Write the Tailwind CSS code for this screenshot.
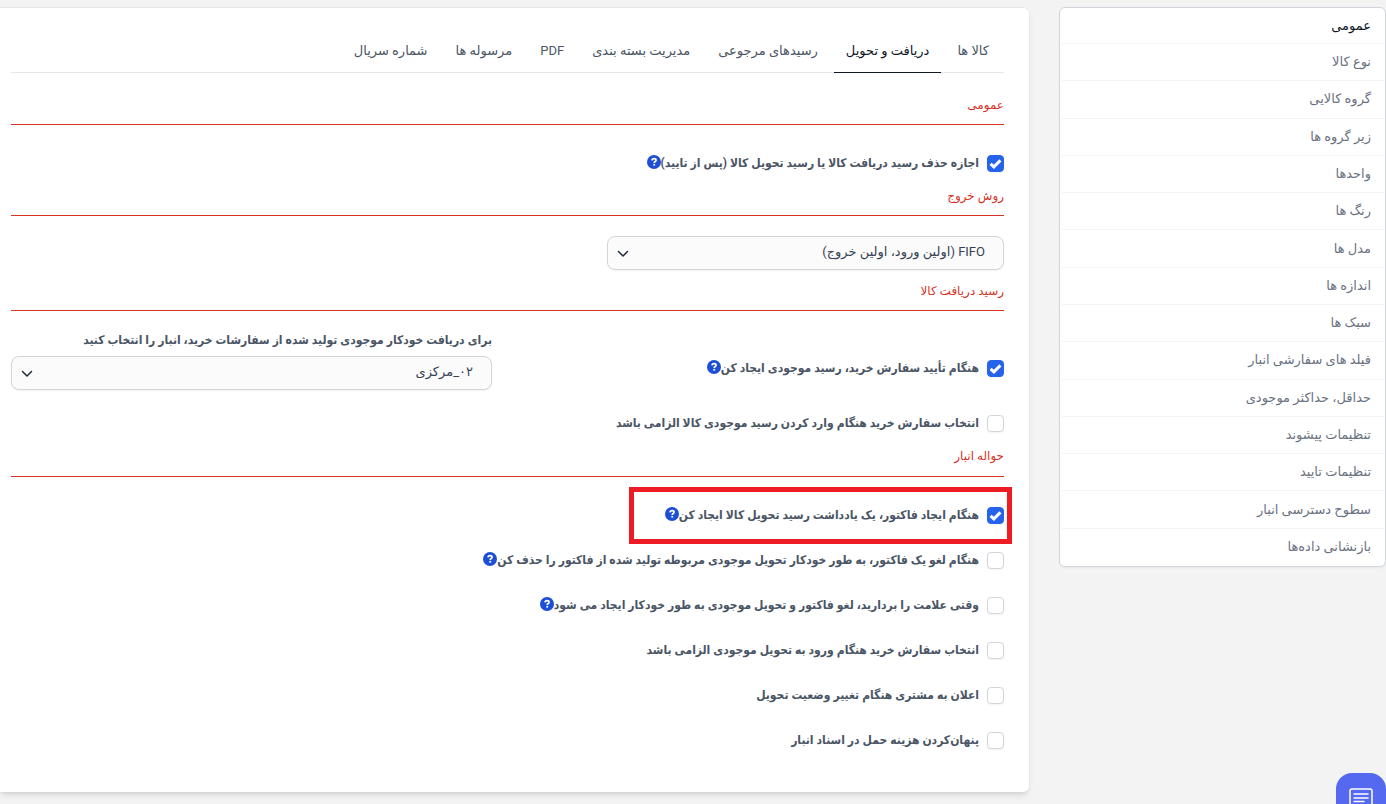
<!DOCTYPE html>
<html lang="fa" dir="rtl">
<head>
<meta charset="utf-8">
<meta name="viewport" content="width=device-width, initial-scale=1">
<title>تنظیمات انبار</title>
<script src="https://cdn.jsdelivr.net/npm/@tailwindcss/browser@4"></script>
</head>
<body class="min-h-screen overflow-x-hidden bg-[#f3f3f3] font-['Roboto','DejaVu_Sans',sans-serif] text-[13px] leading-5 text-gray-600">
<svg class="hidden" aria-hidden="true">
  <symbol id="help" viewBox="0 0 14 14">
    <circle cx="7" cy="7" r="7" fill="#1d4ed8"/>
    <path d="M5 5.400C5.100 4.100 6 3.600 7.100 3.600c1.200 0 2 .7 2 1.600 0 1.300-1.900 1.400-1.900 2.700" fill="none" stroke="#fff" stroke-width="1.700"/>
    <rect x="6.300" y="8.900" width="1.800" height="1.700" fill="#fff"/>
  </symbol>
  <symbol id="chevron" viewBox="0 0 12 8">
    <path d="M1.500 1.500 6 6l4.500-4.500" fill="none" stroke="#1f2937" stroke-width="1.500" stroke-linecap="round" stroke-linejoin="round"/>
  </symbol>
  <symbol id="tick" viewBox="0 0 17 17">
    <path d="M3.600 8.800 6.900 11.900l6.500-6.500" fill="none" stroke="#fff" stroke-width="3"/>
  </symbol>
</svg>
<div class="flex items-start gap-[30px] pt-[7px]">
  <nav aria-label="تنظیمات" class="w-[327px] shrink-0 rounded-md border border-gray-300 bg-white shadow-xs">
    <ul class="grid min-h-[558px] grid-rows-[36px] auto-rows-fr divide-y divide-gray-100 text-[13px] text-gray-500 *:me-[2px] *:flex *:items-center *:ps-[14px]">
      <li><a href="#" aria-current="page" class="text-gray-900">عمومی</a></li>
      <li><a href="#">نوع کالا</a></li>
      <li><a href="#">گروه کالایی</a></li>
      <li><a href="#">زیر گروه ها</a></li>
      <li><a href="#">واحدها</a></li>
      <li><a href="#">رنگ ها</a></li>
      <li><a href="#">مدل ها</a></li>
      <li><a href="#">اندازه ها</a></li>
      <li><a href="#">سبک ها</a></li>
      <li><a href="#">فیلد های سفارشی انبار</a></li>
      <li><a href="#">حداقل، حداکثر موجودی</a></li>
      <li><a href="#">تنظیمات پیشوند</a></li>
      <li><a href="#">تنظیمات تایید</a></li>
      <li><a href="#">سطوح دسترسی انبار</a></li>
      <li><a href="#">بازنشانی داده‌ها</a></li>
    </ul>
  </nav>

  <main class="min-w-0 flex-1 rounded-r-md border-t border-gray-200 bg-white ps-[25px] pe-[11px] pt-5 pb-[42px] shadow-md">
    <nav aria-label="بخش‌ها" class="flex gap-1 border-b border-gray-200 ps-[3px] text-[13px]">
      <a href="#" class="px-3 pt-[13px] pb-[11px]">کالا ها</a>
      <a href="#" aria-current="page" class="-mb-px border-b border-gray-900 px-3 pt-[13px] pb-[11px] text-gray-900">دریافت و تحویل</a>
      <a href="#" class="px-3 pt-[13px] pb-[11px]">رسیدهای مرجوعی</a>
      <a href="#" class="px-3 pt-[13px] pb-[11px]">مدیریت بسته بندی</a>
      <a href="#" class="px-3 pt-[13px] pb-[11px]">PDF</a>
      <a href="#" class="px-3 pt-[13px] pb-[11px]">مرسوله ها</a>
      <a href="#" class="px-3 pt-[13px] pb-[11px]">شماره سریال</a>
    </nav>

    <form class="[&_label]:font-['Roboto','DejaVu_Sans_Condensed','DejaVu_Sans',sans-serif]">
      <h2 class="mt-[22px] border-b border-[#d6321f] pb-[9px] text-[12px] leading-5 text-[#d6321f]">عمومی</h2>
      <div class="mt-7 flex items-center">
        <label class="flex items-center gap-2 text-[12px] font-bold"><span class="relative flex size-[17px]"><input type="checkbox" checked class="peer size-[17px] appearance-none rounded-sm border border-gray-300 bg-white shadow-xs checked:border-[#2563eb] checked:bg-[#2563eb]"><svg class="pointer-events-none absolute inset-0 hidden size-[17px] peer-checked:block"><use href="#tick"/></svg></span>اجازه حذف رسید دریافت کالا یا رسید تحویل کالا (پس از تایید)</label>
        <svg class="mb-[2px] size-[14px]"><use href="#help"/></svg>
      </div>

      <h2 class="mt-[13px] border-b border-[#d6321f] pb-[9px] text-[12px] leading-5 text-[#d6321f]">روش خروج</h2>
      <div class="relative mt-5 w-2/5">
        <select aria-label="روش خروج" class="block h-[34px] w-full appearance-none rounded-lg border border-gray-300 bg-[#fbfbfb] ps-[18px] pe-8 pb-[2px] text-[13px] text-gray-700 shadow-xs"><option>FIFO (اولین ورود، اولین خروج)</option></select>
        <svg class="pointer-events-none absolute end-[10px] top-[14px] h-2 w-3"><use href="#chevron"/></svg>
      </div>

      <h2 class="mt-[11px] border-b border-[#d6321f] pb-[9px] text-[12px] leading-5 text-[#d6321f]">رسید دریافت کالا</h2>
      <div class="mt-[19px] grid grid-cols-2 gap-x-[31px]">
        <div class="flex items-center self-center pt-4">
          <label class="flex items-center gap-2 text-[12px] font-bold"><span class="relative flex size-[17px]"><input type="checkbox" checked class="peer size-[17px] appearance-none rounded-sm border border-gray-300 bg-white shadow-xs checked:border-[#2563eb] checked:bg-[#2563eb]"><svg class="pointer-events-none absolute inset-0 hidden size-[17px] peer-checked:block"><use href="#tick"/></svg></span>هنگام تأیید سفارش خرید، رسید موجودی ایجاد کن</label>
          <svg class="mb-[2px] size-[14px]"><use href="#help"/></svg>
        </div>
        <div>
          <label for="warehouse" class="block text-[12px] leading-5 font-bold whitespace-nowrap">برای دریافت خودکار موجودی تولید شده از سفارشات خرید، انبار را انتخاب کنید</label>
          <div class="relative mt-[6px]">
            <select id="warehouse" class="block h-[34px] w-full appearance-none rounded-lg border border-gray-300 bg-[#fbfbfb] ps-[18px] pe-8 pb-[2px] text-[13px] text-gray-700 shadow-xs"><option>۰۲_مرکزی</option></select>
            <svg class="pointer-events-none absolute end-[10px] top-[14px] h-2 w-3"><use href="#chevron"/></svg>
          </div>
        </div>
      </div>
      <label class="mt-[23px] flex w-fit items-center gap-2 text-[12px] font-bold"><input type="checkbox" class="size-[17px] appearance-none rounded-sm border border-gray-300 bg-white shadow-xs">انتخاب سفارش خرید هنگام وارد کردن رسید موجودی کالا الزامی باشد</label>

      <h2 class="mt-[13px] border-b border-[#d6321f] pb-[10px] text-[12px] leading-5 text-[#d6321f]">حواله انبار</h2>
      <div class="mt-7 flex flex-col items-start gap-[25px]">
        <div class="relative flex items-center">
          <label class="flex items-center gap-2 text-[12px] font-bold"><span class="relative flex size-[17px]"><input type="checkbox" checked class="peer size-[17px] appearance-none rounded-sm border border-gray-300 bg-white shadow-xs checked:border-[#2563eb] checked:bg-[#2563eb]"><svg class="pointer-events-none absolute inset-0 hidden size-[17px] peer-checked:block"><use href="#tick"/></svg></span>هنگام ایجاد فاکتور، یک یادداشت رسید تحویل کالا ایجاد کن</label>
          <svg class="mb-[2px] size-[14px]"><use href="#help"/></svg>
          <span class="pointer-events-none absolute -start-2 -end-9 -top-[18px] -bottom-[19px] border-[5px] border-[#ed1c24]"></span>
        </div>
        <div class="flex items-center">
          <label class="flex items-center gap-2 text-[12px] font-bold"><input type="checkbox" class="size-[17px] appearance-none rounded-sm border border-gray-300 bg-white shadow-xs">هنگام لغو یک فاکتور، به طور خودکار تحویل موجودی مربوطه تولید شده از فاکتور را حذف کن</label>
          <svg class="mb-[2px] size-[14px]"><use href="#help"/></svg>
        </div>
        <div class="flex items-center">
          <label class="flex items-center gap-2 text-[12px] font-bold"><input type="checkbox" class="size-[17px] appearance-none rounded-sm border border-gray-300 bg-white shadow-xs">وقتی علامت را بردارید، لغو فاکتور و تحویل موجودی به طور خودکار ایجاد می شود</label>
          <svg class="mb-[2px] size-[14px]"><use href="#help"/></svg>
        </div>
        <label class="flex items-center gap-2 text-[12px] font-bold"><input type="checkbox" class="size-[17px] appearance-none rounded-sm border border-gray-300 bg-white shadow-xs">انتخاب سفارش خرید هنگام ورود به تحویل موجودی الزامی باشد</label>
        <label class="flex items-center gap-2 text-[12px] font-bold"><input type="checkbox" class="size-[17px] appearance-none rounded-sm border border-gray-300 bg-white shadow-xs">اعلان به مشتری هنگام تغییر وضعیت تحویل</label>
        <label class="flex items-center gap-2 text-[12px] font-bold"><input type="checkbox" class="size-[17px] appearance-none rounded-sm border border-gray-300 bg-white shadow-xs">پنهان‌کردن هزینه حمل در اسناد انبار</label>
      </div>
    </form>
  </main>
</div>

<button type="button" aria-label="گفتگو" class="fixed right-0 -bottom-[19px] flex size-[50px] items-center justify-center rounded-2xl bg-[#5468f0]">
  <svg class="h-6 w-[26px]" viewBox="0 0 26 24" fill="none" stroke="#fff">
    <path d="M4 3h18q2 0 2 2v14q0 2-2 2H4q-2 0-2-2V5q0-2 2-2z" stroke-width="1.500"/>
    <path d="M6 8h14M6 12h14M6 15.500h10" stroke-width="1.500" stroke-linecap="round"/>
  </svg>
</button>
</body>
</html>
